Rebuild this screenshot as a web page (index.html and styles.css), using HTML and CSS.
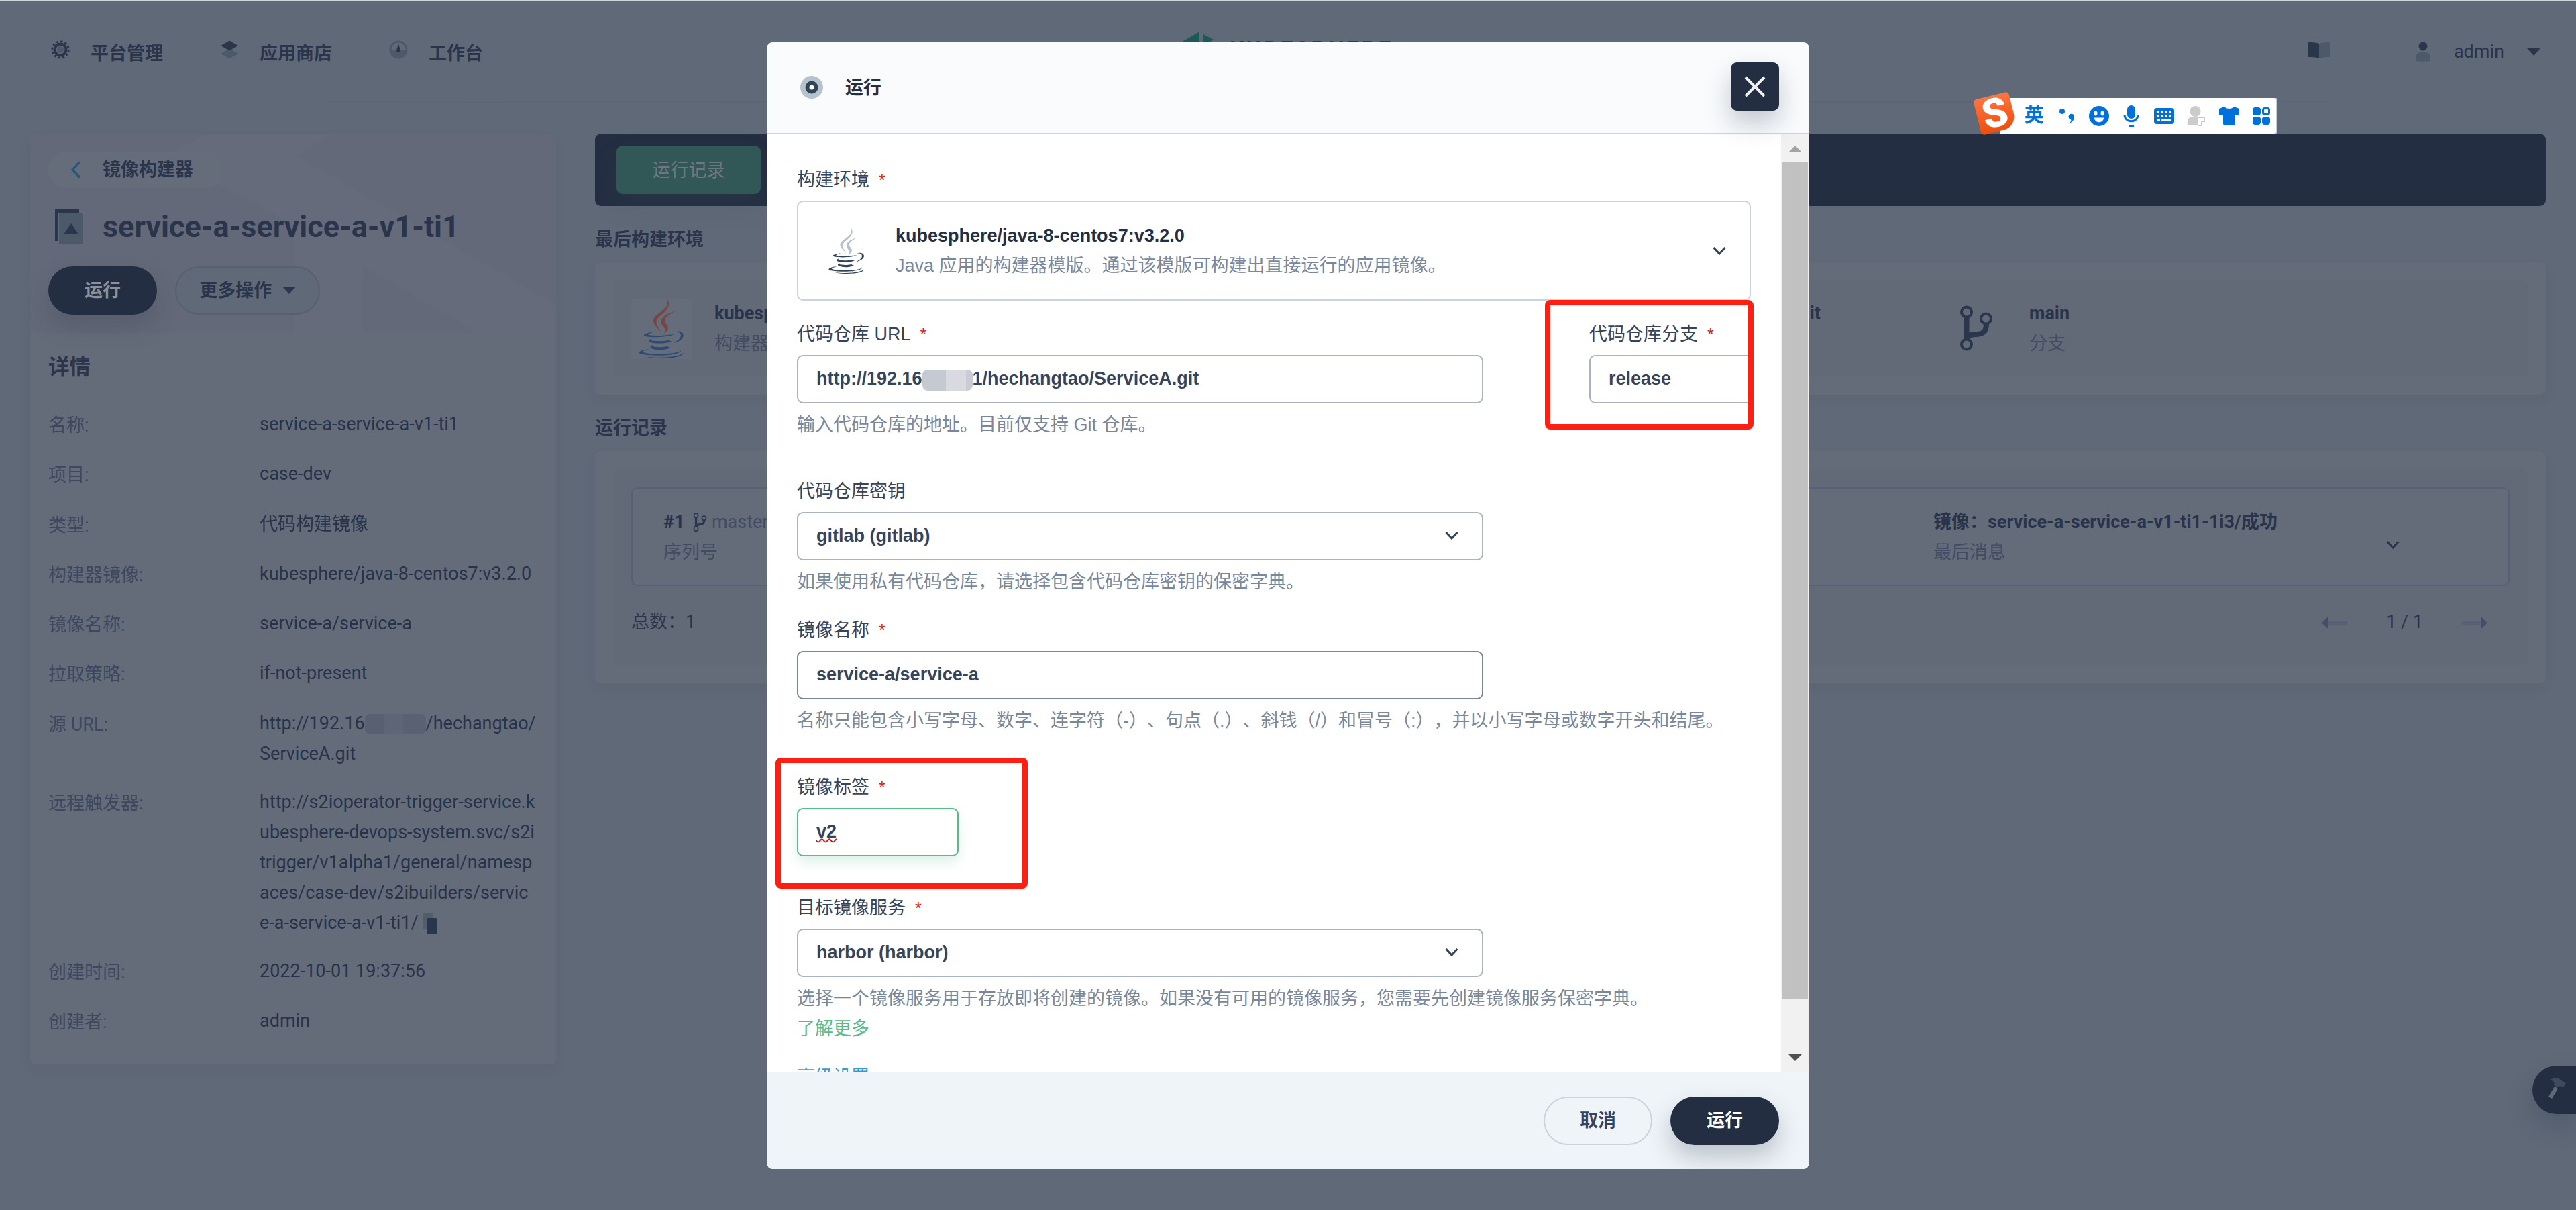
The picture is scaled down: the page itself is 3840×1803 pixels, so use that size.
FILE: index.html
```html
<!DOCTYPE html>
<html lang="zh-CN">
<head>
    <meta charset="UTF-8">
    <meta name="viewport" content="width=device-width, initial-scale=1.0">
    <title>KubeSphere</title>
    <link rel="stylesheet" href="styles.css">
</head>
<body>
    <svg width="0" height="0" class="sprite">
        <symbol id="i-down" viewBox="0 0 20 14"><path d="M1.5 2 L10 11 L18.500 2" fill="none" stroke="currentColor" stroke-width="3"/></symbol>
        <symbol id="i-git" viewBox="0 0 48 68">
            <path d="M9.500 17v34M39 28c0 12-6 15-16 15-7 0-12 2-13 8" fill="none" stroke="currentColor" stroke-width="8"/>
            <circle cx="9.500" cy="10" r="7.500" fill="none" stroke="currentColor" stroke-width="4"/>
            <circle cx="38.500" cy="20" r="7.500" fill="none" stroke="currentColor" stroke-width="4"/>
            <circle cx="9.500" cy="58" r="7.500" fill="none" stroke="currentColor" stroke-width="4"/>
        </symbol>
        <symbol id="i-java" viewBox="3 0 18.200 24" preserveAspectRatio="none">
            <path class="steam" d="M13.116 11.475c1.158 1.333-.304 2.533-.304 2.533s2.939-1.518 1.589-3.418c-1.261-1.772-2.228-2.652 3.007-5.688 0-.001-8.216 2.051-4.292 6.573M14.401 0s2.494 2.494-2.365 6.330c-3.896 3.077-.888 4.832-.001 6.836-2.274-2.053-3.943-3.858-2.824-5.539 1.644-2.469 6.197-3.665 5.190-7.627"/>
            <path class="cup" d="M8.851 18.560s-.917.534.653.714c1.902.218 2.874.187 4.969-.211 0 0 .552.346 1.321.646-4.699 2.013-10.633-.118-6.943-1.149M8.276 15.933s-1.028.761.542.924c2.032.209 3.636.227 6.413-.308 0 0 .384.389.987.602-5.679 1.661-12.007.130-7.942-1.218M19.330 20.504s.679.559-.747.991c-2.712.822-11.288 1.069-13.669.033-.856-.373.750-.890 1.254-.998.527-.114.828-.093.828-.093-.953-.671-6.156 1.317-2.643 1.887 9.580 1.553 17.462-.700 14.977-1.820M9.292 13.210s-4.362 1.036-1.544 1.412c1.189.159 3.561.123 5.770-.062 1.806-.152 3.618-.477 3.618-.477s-.637.272-1.098.587c-4.429 1.165-12.986.623-10.522-.568 2.082-1.006 3.776-.892 3.776-.892M17.116 17.584c4.503-2.340 2.421-4.589.968-4.285-.355.074-.515.138-.515.138s.132-.207.385-.297c2.875-1.011 5.086 2.981-.928 4.562 0-.001.070-.062.090-.118M9.734 23.924c4.322.277 10.959-.153 11.116-2.198 0 0-.302.775-3.572 1.391-3.688.694-8.239.613-10.937.168 0-.001.553.457 3.393.639"/>
        </symbol>
    </svg>

    <header class="topbar">
        <nav class="nav">
            <a class="nav-item">
                <svg width="28" height="28" viewBox="0 0 28 28"><circle cx="14" cy="14" r="12.200" fill="none" stroke="#29364c" stroke-width="3" stroke-dasharray="3.190 3.190"/><circle cx="14" cy="14" r="8.500" fill="none" stroke="#29364c" stroke-width="4"/><circle cx="14" cy="14" r="5" fill="#4c5969"/></svg>
                <span>平台管理</span>
            </a>
            <a class="nav-item">
                <svg width="28" height="28" viewBox="0 0 28 28"><path d="M1 20 14 12.500 27 20 14 27.500z" fill="#4c5969"/><path d="M1 8 14 .5 27 8 14 15.500z" fill="#29364c"/></svg>
                <span>应用商店</span>
            </a>
            <a class="nav-item">
                <svg width="28" height="28" viewBox="0 0 28 28"><circle cx="14" cy="14" r="12" fill="none" stroke="#4c5969" stroke-width="3"/><path d="M1 14h26a13 13 0 0 1-26 0z" fill="#4c5969"/><path d="M14 5l3 10a3 3 0 1 1-6 0z" fill="#29364c"/></svg>
                <span>工作台</span>
            </a>
        </nav>
        <div class="brand">
            <svg width="50" height="40" viewBox="0 0 50 40"><path d="M0 16.500 28 0v40L0 26zM34 4l15 8-15 9z" fill="#1b5a55"/></svg>
            <span>KUBESPHERE</span>
        </div>
        <div class="user">
            <svg class="book" width="32" height="24" viewBox="0 0 32 24"><path d="M16 2C11 0 5 0 0 0v22c5 0 11 0 16 2z" fill="#29364c"/><path d="M16 2c5-2 11-2 16-2v22c-5 0-11 0-16 2z" fill="#4c5969"/></svg>
            <svg class="avatar" width="22" height="30" viewBox="0 0 22 30"><circle cx="11" cy="7" r="6.500" fill="#29364c"/><path d="M0 29V23c0-10 22-10 22 0v6q-11 1-22 0z" fill="#4c5969"/></svg>
            <span>admin</span>
            <i class="caret"></i>
        </div>
    </header>

    <div class="page">
        <aside class="side">
            <div class="side-head">
                <svg class="pattern" width="784" height="297" viewBox="0 0 784 297"><path d="M260 0h190l-54 33 388 222v42H666L496 197v100H394V137L284 78 217 27z" fill="#656b7a"/></svg>
                <div class="back">
                    <svg width="16" height="26" viewBox="0 0 16 26"><path d="M14 1.500 3 13l11 11.500" fill="none" stroke="#2a567a" stroke-width="3.500"/></svg>
                    <span>镜像构建器</span>
                </div>
                <div class="name">
                    <svg width="42" height="54" viewBox="0 0 42 54"><path d="M0 1h36v5H5v42H0z" fill="#29364c"/><path d="M6 6h36v47H6z" fill="#4c5969"/><path d="M13.500 37 24 22l10.500 15z" fill="#29364c"/></svg>
                    <h1>service-a-service-a-v1-ti1</h1>
                </div>
                <div class="actions">
                    <button class="btn btn-run">运行</button>
                    <button class="btn btn-more">更多操作 <i class="caret"></i></button>
                </div>
            </div>
            <div class="detail">
                <h2>详情</h2>
                <dl>
                    <div class="row"><dt>名称:</dt><dd>service-a-service-a-v1-ti1</dd></div>
                    <div class="row"><dt>项目:</dt><dd>case-dev</dd></div>
                    <div class="row"><dt>类型:</dt><dd>代码构建镜像</dd></div>
                    <div class="row"><dt>构建器镜像:</dt><dd>kubesphere/java-8-centos7:v3.2.0</dd></div>
                    <div class="row"><dt>镜像名称:</dt><dd>service-a/service-a</dd></div>
                    <div class="row"><dt>拉取策略:</dt><dd>if-not-present</dd></div>
                    <div class="row"><dt>源 URL:</dt><dd>http://192.16<i class="mask"></i>/hechangtao/<br>ServiceA.git</dd></div>
                    <div class="row"><dt>远程触发器:</dt><dd>http://s2ioperator-trigger-service.k<br>ubesphere-devops-system.svc/s2i<br>trigger/v1alpha1/general/namesp<br>aces/case-dev/s2ibuilders/servic<br>e-a-service-a-v1-ti1/ <svg class="copy" width="22" height="31" viewBox="0 0 22 31"><rect width="15" height="24" rx="2" fill="#515c6c"/><rect x="6.500" y="7" width="15" height="24" rx="2" fill="#29364c"/></svg></dd></div>
                    <div class="row"><dt>创建时间:</dt><dd>2022-10-01 19:37:56</dd></div>
                    <div class="row"><dt>创建者:</dt><dd>admin</dd></div>
                </dl>
            </div>
        </aside>

        <main class="main">
            <div class="tabs"><span class="tab">运行记录</span></div>

            <h3>最后构建环境</h3>
            <section class="card">
                <div class="env">
                    <div class="env-item env-builder">
                        <span class="java-box"><svg class="java-color" width="68" height="88"><use href="#i-java"/></svg></span>
                        <p><b>kubesphere/java-8-centos7:v3.2.0</b><br>构建器</p>
                    </div>
                    <div class="env-item env-repo">
                        <p><b>ServiceA.git</b></p>
                    </div>
                    <div class="env-item env-branch">
                        <svg class="git" width="48" height="68"><use href="#i-git"/></svg>
                        <p><b>main</b><br>分支</p>
                    </div>
                </div>
            </section>

            <h3 class="records">运行记录</h3>
            <section class="card">
                <div class="runs">
                    <div class="run">
                        <p class="run-no"><b>#1</b> <svg class="git" width="21" height="28"><use href="#i-git"/></svg> master<br>序列号</p>
                        <p class="run-msg"><b>镜像：service-a-service-a-v1-ti1-1i3/成功</b><br>最后消息</p>
                        <svg class="run-down" width="20" height="14"><use href="#i-down"/></svg>
                    </div>
                    <div class="pager">
                        <span class="total">总数：1</span>
                        <svg width="38" height="20" viewBox="0 0 38 20"><path d="M10 8h28v5H10z" fill="#566176"/><path d="M0 10.500 10 0v20z" fill="#444f65"/></svg>
                        <span class="page-no">1 / 1</span>
                        <svg width="38" height="20" viewBox="0 0 38 20"><path d="M0 8h28v5H0z" fill="#566176"/><path d="M38 10.500 28 0v20z" fill="#444f65"/></svg>
                    </div>
                </div>
            </section>
        </main>
    </div>

    <div class="toolbox">
        <svg width="28" height="32" viewBox="0 0 28 32"><path d="M10 13l5 3-9 15-5-3z" fill="#5f6979"/><path d="M2 4C8-1 16-1 20 4l7 4-4 6-6-2-3 2-5-3c2-5-2-7-7-7z" fill="#3e4a5d"/></svg>
    </div>

    <div class="modal">
        <div class="modal-head">
            <svg width="34" height="34" viewBox="0 0 34 34"><circle cx="17" cy="17" r="17" fill="#b6c2cd"/><circle cx="17" cy="17" r="6.500" fill="#fff" stroke="#324558" stroke-width="6"/></svg>
            <span>运行</span>
            <button class="close"><svg width="34" height="34" viewBox="0 0 34 34"><path d="M3 3l28 28M31 3 3 31" stroke="#eff0f2" stroke-width="4"/></svg></button>
        </div>
        <div class="modal-main">
            <form class="form">
                <label>构建环境<em>*</em></label>
                <div class="builder">
                    <svg class="java-mono" width="54" height="68"><use href="#i-java"/></svg>
                    <p><b>kubesphere/java-8-centos7:v3.2.0</b><br>Java 应用的构建器模版。通过该模版可构建出直接运行的应用镜像。</p>
                    <svg class="arrow" width="20" height="14"><use href="#i-down"/></svg>
                </div>

                <div class="cols">
                    <div class="col-url">
                        <label>代码仓库 URL<em>*</em></label>
                        <div class="input">http://192.16<i class="mask mask-light"></i>1/hechangtao/ServiceA.git</div>
                        <p class="help">输入代码仓库的地址。目前仅支持 Git 仓库。</p>
                    </div>
                    <div class="col-branch">
                        <label>代码仓库分支<em>*</em></label>
                        <div class="input">release</div>
                    </div>
                </div>

                <label>代码仓库密钥</label>
                <div class="input">gitlab (gitlab)<svg class="arrow" width="20" height="14"><use href="#i-down"/></svg></div>
                <p class="help">如果使用私有代码仓库，请选择包含代码仓库密钥的保密字典。</p>

                <label class="near">镜像名称<em>*</em></label>
                <div class="input input-dark">service-a/service-a</div>
                <p class="help">名称只能包含小写字母、数字、连字符（-）、句点（.）、斜钱（/）和冒号（:），并以小写字母或数字开头和结尾。</p>

                <label>镜像标签<em>*</em></label>
                <div class="input input-focus"><span class="typo">v2</span></div>

                <label>目标镜像服务<em>*</em></label>
                <div class="input">harbor (harbor)<svg class="arrow" width="20" height="14"><use href="#i-down"/></svg></div>
                <p class="help">选择一个镜像服务用于存放即将创建的镜像。如果没有可用的镜像服务，您需要先创建镜像服务保密字典。<br><a class="learn">了解更多</a></p>
                <a class="advanced">高级设置</a>
            </form>
            <div class="scrollbar">
                <i class="up"></i>
                <i class="thumb"></i>
                <i class="down"></i>
            </div>
        </div>
        <div class="modal-foot">
            <button class="btn btn-cancel">取消</button>
            <button class="btn btn-ok">运行</button>
        </div>
    </div>

    <div class="mark mark-branch"></div>
    <div class="mark mark-tag"></div>

    <!-- input method bar -->
    <div class="ime">
        <span class="ime-logo">S</span>
        <b>英</b>
        <svg width="24" height="24" viewBox="0 0 24 24"><circle cx="5" cy="5" r="4" fill="#0070dc"/><path d="M15 23c3-2 4-4 3-6a4.200 4.200 0 1 1 5-4c0 5-3 8-7 10z" fill="#0070dc"/></svg>
        <svg width="30" height="30" viewBox="0 0 30 30"><circle cx="15" cy="15" r="15" fill="#0070dc"/><ellipse cx="10" cy="11" rx="2.500" ry="3.500" fill="#fff"/><ellipse cx="20" cy="11" rx="2.500" ry="3.500" fill="#fff"/><path d="M8 17.500h14c0 9-14 9-14 0z" fill="#fff"/></svg>
        <svg width="24" height="32" viewBox="0 0 24 32"><rect x="6" y="0" width="12" height="20" rx="6" fill="#0070dc"/><path d="M2 14c0 13 20 13 20 0M8 30.500h8" fill="none" stroke="#0070dc" stroke-width="3"/></svg>
        <svg width="30" height="24" viewBox="0 0 30 24"><rect width="30" height="24" rx="4" fill="#0070dc"/><path d="M4 4h4v4H4zM10 4h4v4h-4zM16 4h4v4h-4zM22 4h4v4h-4zM4 10h4v4H4zM10 10h4v4h-4zM16 10h4v4h-4zM22 10h4v4h-4zM4 16h5v4H4zM11 16h15v4H11z" fill="#fff"/></svg>
        <svg width="28" height="30" viewBox="0 0 28 30"><circle cx="12.500" cy="8" r="8" fill="#cbcbcb"/><path d="M1 29c-1-8 1-13 8-13h8v13z" fill="#cbcbcb"/><path d="M15 17h11v6h-4v6h-5" fill="none" stroke="#cbcbcb" stroke-width="2"/></svg>
        <svg width="30" height="28" viewBox="0 0 30 28"><path d="M8 0c3 4 11 4 14 0l8 3v9h-6v13q0 3-3 3H9q-3 0-3-3V12H0V3z" fill="#0070dc"/></svg>
        <svg width="26" height="26" viewBox="0 0 26 26"><rect width="12" height="12" rx="4" fill="#0070dc"/><rect y="14" width="12" height="12" rx="4" fill="#0070dc"/><rect x="14" y="14" width="12" height="12" rx="4" fill="#0070dc"/><rect x="15.500" y="1.500" width="9" height="9" rx="2.500" fill="none" stroke="#0070dc" stroke-width="3"/></svg>
    </div>
</body>
</html>
```
FILE: styles.css
```css
* {
    box-sizing: border-box;
}
body {
    margin: 0;
    width: 3840px;
    height: 1803px;
    overflow: hidden;
    position: relative;
    border-top: 1px solid #cfd6d8;
    background-color: #606978;
    color: #2a354c;
    font-family: Roboto, "Noto Sans CJK SC", sans-serif;
    font-size: 27px;
    line-height: 45px;
    text-spacing-trim: space-all;
}
h1, h2, h3, p, dl, dd {
    margin: 0;
}
button {
    font: inherit;
    padding: 0;
    border: none;
}
svg {
    display: block;
    flex: none;
}
.sprite {
    position: absolute;
}
.caret {
    display: inline-block;
    border: 10.500px solid transparent;
    border-top: 11px solid #29364c;
    border-bottom: 0;
}

/* top bar */
.topbar {
    height: 152px;
    display: flex;
    padding: 0 53px 0 76px;
    border-bottom: 2px solid;
    border-image: linear-gradient(90deg, #606978 5%, #5b6575 30%, #5b6575 80%, #606978 95%) 1;
}
.nav, .nav-item, .user, .brand {
    display: flex;
}
.nav {
    width: 1684px;
    gap: 85px;
    padding-top: 55px;
    font-weight: bold;
}
.nav-item {
    gap: 31px;
}
.nav-item svg {
    margin-top: 4px;
}
.nav-item span {
    padding-top: 2px;
}
.brand {
    gap: 23px;
    padding-top: 46px;
    font-size: 34px;
    font-weight: bold;
    color: #303b55;
}
.brand span {
    padding-top: 4px;
    letter-spacing: 3.200px;
}
.user {
    margin-left: auto;
    padding-top: 54px;
    align-items: flex-start;
}
.book {
    margin: 8px 128px 0 0;
}
.avatar {
    margin: 7px 35px 0 0;
}
.user .caret {
    margin: 17px 0 0 34px;
}

.page {
    display: flex;
    align-items: flex-start;
    gap: 58px;
    padding: 46px 45px 0;
}

/* left panel */
.side {
    width: 784px;
    height: 1387px;
    border-radius: 9px;
    background-color: #656c79;
    box-shadow: 0 9px 18px rgba(36, 46, 66, 0.06);
}
.side-head {
    position: relative;
    height: 297px;
    padding: 27px;
    background-color: #636978;
    border-radius: 9px 9px 0 0;
}
.pattern {
    position: absolute;
    left: 0;
    top: 0;
}
.back {
    position: relative;
    width: 261px;
    height: 54px;
    display: flex;
    align-items: center;
    gap: 32px;
    padding-left: 33px;
    border-radius: 27px;
    background-color: #666d7a;
    font-weight: bold;
}
.back span {
    padding-top: 1px;
}
.name {
    position: relative;
    display: flex;
    gap: 29px;
    margin: 31px 0 0 10px;
}
.name h1 {
    font-size: 45px;
    line-height: 54px;
}
.actions {
    position: relative;
    display: flex;
    gap: 27px;
    margin-top: 32px;
}
.btn {
    width: 162px;
    height: 72px;
    border-radius: 36px;
    font-weight: bold;
}
.btn-run {
    background-color: #242e42;
    color: #8b929d;
    box-shadow: 0 18px 36px rgba(36, 46, 66, 0.2);
}
.btn-more {
    width: 216px;
    border: 2px solid #56606f;
    background-color: #606978;
    color: #2a354c;
}
.btn-more .caret {
    margin: 0 0 4px 9px;
}
.detail {
    padding: 29px 27px 27px;
}
.detail h2 {
    font-size: 31.500px;
    line-height: 45px;
    margin-bottom: 40px;
}
.row {
    display: flex;
    min-height: 47.250px;
    margin-bottom: 27px;
}
.row dt {
    width: 315px;
    padding-top: 2px;
    color: #3c485f;
}
.row dd {
    line-height: 45px;
    white-space: nowrap;
    color: #27334a;
}
.mask {
    display: inline-block;
    width: 91px;
    height: 30px;
    vertical-align: -7px;
    border-radius: 8px;
    background: linear-gradient(90deg, #596071 32%, #5e6576 32%, #5e6576 63%, #5a6172 63%);
}
.copy {
    display: inline-block;
    vertical-align: -8px;
}
.row .mask, .copy {
    margin-top: -4px;
}

/* right column */
.main {
    flex: 1;
}
.tabs {
    height: 108px;
    padding: 18px 32px;
    border-radius: 9px;
    background-color: #242e42;
}
.tab {
    display: block;
    width: 215px;
    height: 72px;
    line-height: 75px;
    text-align: center;
    border-radius: 9px;
    background-color: #315757;
    color: #6d7882;
    box-shadow: 0 18px 36px rgba(49, 87, 87, 0.2);
}
h3 {
    margin: 28px 0 10px;
    font-size: 27px;
    line-height: 45px;
}
h3.records {
    margin-bottom: 11px;
}
.card {
    padding: 27px;
    border-radius: 9px;
    background-color: #656c79;
    box-shadow: 0 9px 18px rgba(36, 46, 66, 0.06);
}
.card p {
    color: #414c62;
}
.card b {
    color: #28344b;
}
.env {
    height: 144px;
    display: flex;
    border-radius: 9px;
    background-color: #636a77;
}
.env-item {
    display: flex;
    padding: 28px 27px 26px;
    white-space: nowrap;
}
.env-builder {
    width: 1646px;
    gap: 34px;
}
.java-box {
    width: 90px;
    height: 90px;
    padding: 1px 11px;
    background-color: #666d7a;
}
.steam {
    fill: var(--steam);
}
.cup {
    fill: var(--cup);
}
.java-color {
    --steam: #7a4440;
    --cup: #2c4a74;
}
.java-mono {
    --steam: #b6c2cd;
    --cup: #324558;
}
.env-repo {
    width: 345px;
}
.env-repo p {
    width: 127px;
    text-align: right;
    direction: rtl;
}
.env-branch {
    padding-left: 17px;
    gap: 55px;
}
.git {
    color: #29364c;
}
.env-branch .git {
    margin-top: 10px;
}
.runs {
    height: 292px;
    padding: 27px;
    border-radius: 9px;
    background-color: #636a77;
}
.run {
    height: 147px;
    display: flex;
    align-items: center;
    padding: 3px 162px 0 46px;
    border: 2px solid #566176;
    border-radius: 9px;
    background-color: #656c79;
}
.run-no {
    width: 1893px;
}
.run-no .git {
    display: inline-block;
    vertical-align: -5px;
    margin: 0 0 0 6px;
}
.run-msg {
    flex: 1;
}
.run-down {
    color: #29364c;
    margin-top: 22px;
}
.pager {
    display: flex;
    align-items: center;
    padding: 32px 33px 0 0;
}
.total {
    flex: 1;
}
.page-no {
    margin: 0 58px;
}
.toolbox {
    position: absolute;
    right: 0;
    top: 1587px;
    width: 65px;
    height: 72px;
    padding: 18px 0 0 23px;
    border-radius: 36px 0 0 36px;
    background-color: #242e42;
    box-shadow: 0 18px 36px rgba(36, 46, 66, 0.25);
}

/* dialog */
.modal {
    position: absolute;
    left: 1143px;
    top: 62px;
    width: 1554px;
    height: 1679px;
    overflow: hidden;
    border-radius: 9px;
    background-color: #fff;
    display: flex;
    flex-direction: column;
    font-family: "Liberation Sans", "Noto Sans CJK SC", sans-serif;
}
.modal-head {
    height: 137px;
    flex: none;
    position: relative;
    display: flex;
    align-items: center;
    padding: 0 45px 2px 50px;
    border-bottom: 2px solid #ccd3db;
    background-color: #f9fbfd;
    color: #242e42;
    font-weight: bold;
}
.modal-head span {
    flex: 1;
    margin-left: 33px;
    padding-top: 4px;
}
.close {
    width: 72px;
    height: 72px;
    padding: 19px;
    margin-top: -2px;
    border-radius: 9px;
    background-color: #242e42;
    box-shadow: 0 18px 36px rgba(36, 46, 66, 0.25);
}
.modal-main {
    height: 1398px;
    display: flex;
    overflow: hidden;
}
.form {
    width: 1512px;
    padding: 45px 45px 0;
    flex: none;
}
.form label {
    display: block;
    height: 45px;
    margin: 54px 0 9px;
    padding-top: 1px;
    color: #36435c;
}
.form > label:first-child {
    margin-top: 0;
}
.form label.near {
    margin-top: 27px;
}
.form em {
    margin-left: 14px;
    font-style: normal;
    font-size: 25px;
    color: #ca2621;
}
.builder {
    height: 149px;
    display: flex;
    align-items: center;
    padding: 0 35px 0 45px;
    border: 2px solid #ccd3db;
    border-radius: 9px;
}
.builder p {
    flex: 1;
    margin-left: 46px;
    color: #79879c;
}
.builder b {
    color: #242e42;
}
.arrow {
    color: #324558;
}
.cols {
    display: flex;
    overflow: hidden;
    margin-top: 27px;
}
.cols label {
    margin-top: 0;
}
.col-url {
    width: 1181px;
    flex: none;
}
.col-branch {
    flex: none;
    width: 500px;
}
.input {
    width: 1023px;
    height: 72px;
    display: flex;
    align-items: center;
    padding: 0 35px 2px 27px;
    border: 2px solid #abb4be;
    border-radius: 9px;
    color: #36435c;
    font-weight: bold;
}
.input .arrow {
    margin-left: auto;
}
.input-dark {
    border-color: #79879c;
}
.input-focus {
    width: 241px;
    border-color: #55bc8a;
    box-shadow: 0 9px 18px rgba(85, 188, 138, 0.2);
}
.typo {
    text-decoration: underline wavy #f00 2px;
    text-decoration-skip-ink: none;
}
.mask-light {
    width: 75px;
    height: 31px;
    margin-top: 5px;
    background: linear-gradient(90deg, #c5c9d2 47%, #d8dae0 47%, #d8dae0 87%, #c9ccd5 87%);
}
.help {
    position: relative;
    margin-top: 9px;
    top: 1px;
    color: #79879c;
    white-space: nowrap;
}
.learn {
    color: #55bc8a;
}
.advanced {
    display: block;
    margin-top: 28px;
    color: #329dce;
}
.scrollbar {
    width: 42px;
    height: 1398px;
    display: flex;
    flex-direction: column;
    align-items: center;
    border-right: 1px solid #fff;
    background-color: #f1f1f1;
}
.up {
    margin-top: 17px;
    border: 10px solid transparent;
    border-bottom-color: #a3a3a3;
    border-top: 0;
}
.thumb {
    width: 38px;
    height: 1246px;
    margin-top: 15px;
    background-color: #c1c1c1;
}
.down {
    margin-top: 83px;
    border: 10px solid transparent;
    border-top-color: #505050;
    border-bottom: 0;
}
.modal-foot {
    height: 144px;
    flex: none;
    display: flex;
    align-items: center;
    justify-content: flex-end;
    gap: 27px;
    padding-right: 45px;
    background-color: #eff4f9;
}
.btn-cancel {
    border: 2px solid #ccd3db;
    background-color: transparent;
    color: #36435c;
}
.btn-ok {
    background-color: #242e42;
    color: #fff;
    box-shadow: 0 18px 36px rgba(36, 46, 66, 0.25);
}

/* highlight frames */
.mark {
    position: absolute;
    border: 8px solid #ff1f12;
    border-radius: 8px;
}
.mark-branch {
    left: 2303px;
    top: 446px;
    width: 311px;
    height: 193px;
}
.mark-tag {
    left: 1156px;
    top: 1128px;
    width: 376px;
    height: 195px;
}

.ime {
    position: absolute;
    left: 2942px;
    top: 145px;
    width: 453px;
    height: 53px;
    display: grid;
    grid-template-columns: repeat(8, 48.400px);
    align-items: center;
    justify-items: center;
    padding-left: 66px;
    border-radius: 4px;
    background: linear-gradient(#fff, #fff) 40px 0 no-repeat;
    box-shadow: inset -2px 0 #c3cedb;
}
.ime b {
    font-size: 29px;
    color: #0070dc;
}
.ime-logo {
    position: absolute;
    left: 5px;
    top: -4px;
    width: 54px;
    height: 54px;
    line-height: 54px;
    text-align: center;
    border-radius: 5px 5px 20px 5px;
    background: linear-gradient(#ff7440, #f04d0c);
    color: #fff;
    font-size: 60px;
    font-weight: 900;
    transform: rotate(-14deg);
}
```
